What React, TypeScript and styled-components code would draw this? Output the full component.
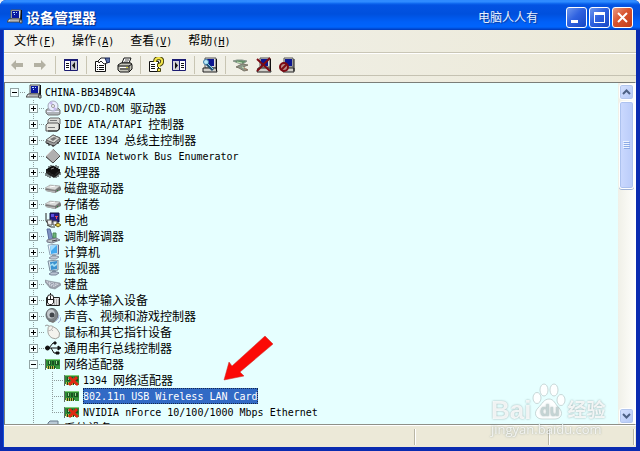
import React from "react";
import styled, { createGlobalStyle, css } from "styled-components";

const Global = createGlobalStyle`
  * { box-sizing: border-box; }
  body { margin: 0; background: #e8f0fa; }
  button { font: inherit; color: inherit; border: 0; background: none; padding: 0; margin: 0; }
  svg { display: block; flex: none; }
`;

const CJK = `"Noto Sans CJK SC", sans-serif`;

const Window = styled.div`
  display: flex;
  flex-direction: column;
  height: 100vh;
  min-height: 240px;
  font: 12px/16px ${CJK};
  color: #000;
  border-radius: 6px 6px 0 0;
  overflow: hidden;
  background: #0a2bb0;
`;

const TitleBar = styled.header`
  display: flex;
  align-items: center;
  flex: none;
  height: 30px;
  padding: 4px 7px 0 7px;
  gap: 3px;
  color: #fff;
  background: linear-gradient(#2f8bff 0, #2f8bff 2px, #1470f4 3px, #0353e2 5px, #0050dd 14px, #0060f8 22px, #0064fc 27px, #0048d0 29px, #0038b8 30px);
`;

const Title = styled.h1`
  flex: 1;
  margin: 0;
  font: bold 14px/20px ${CJK};
  text-shadow: 1px 1px 1px #0a2a80;
`;

const Author = styled.span`
  padding-right: 25px;
  font: 12px/20px ${CJK};
  color: #e8f2ff;
  text-shadow: 1px 1px 1px #0a3a9a;
`;

const Captions = styled.div`
  display: flex;
  gap: 2px;
`;

const CaptionButton = styled.button<{ $close?: boolean }>`
  display: grid;
  place-items: center;
  width: 21px;
  height: 21px;
  border: 1px solid #fff;
  border-radius: 3px;
  background: ${(p) =>
    p.$close
      ? "linear-gradient(135deg, #e89a84, #d8532e 45%, #c03c18)"
      : "linear-gradient(135deg, #6f98ee, #2f62e0 45%, #1746c4)"};
`;

const Body = styled.main`
  display: flex;
  flex-direction: column;
  flex: 1;
  min-height: 0;
  margin: 0 4px 4px;
  background: linear-gradient(90deg, #f4f4ee, #efeee3 50%, #ece9d8);
  box-shadow: -1px 0 #1450d8;
`;

const MenuBar = styled.nav`
  display: flex;
  flex: none;
  height: 23px;
  padding-left: 2px;
  border-bottom: 1px solid #c9c6b6;
`;

const MenuItem = styled.button`
  padding: 0 8px;
  white-space: nowrap;
`;

const ToolBar = styled.div`
  display: flex;
  flex: none;
  align-items: center;
  height: 23px;
  padding-left: 2px;
  border-top: 1px solid #fff;
  border-bottom: 1px solid #c5c2b2;
`;

const ToolButton = styled.button`
  width: 23px;
  padding: 2px 4px 2px 3px;
`;

const Separator = styled.span`
  width: 1px;
  height: 18px;
  margin: 0 4px 0 3px;
  background: #c8c5b3;
`;

const Pane = styled.section`
  display: flex;
  flex: 1;
  min-height: 0;
  margin-top: 6px;
  border: 1px solid #7b7e78;
  border-right-color: #fff;
  border-bottom-color: #8f9088;
  background: #e6ffff;
`;

const Tree = styled.ul`
  flex: 1;
  min-width: 0;
  overflow: hidden;
  margin: 0;
  padding: 1px 0 0 2px;
  list-style: none;
`;

const Row = styled.li`
  display: flex;
  height: 16px;
  white-space: nowrap;
`;

const dotsV = "repeating-linear-gradient(#8f9c9c 0 1px, transparent 1px 2px)";
const dotsH = "repeating-linear-gradient(90deg, #8f9c9c 0 1px, transparent 1px 2px)";

const Cell = styled.span<{ $line: "none" | "full" | "half"; $arm?: boolean }>`
  display: flex;
  flex: none;
  align-items: center;
  width: 19px;
  height: 16px;
  padding-left: 3px;
  background-repeat: no-repeat;
  ${(p) => {
    const v = p.$line === "full" ? "1px 16px" : p.$line === "half" ? "1px 8px" : "0 0";
    const h = p.$arm ? "12px 1px" : "0 0";
    return css`
      background-image: ${dotsV}, ${dotsH};
      background-size: ${v}, ${h};
      background-position: 7px 0, 7px 8px;
    `;
  }}
`;

const Expander = styled.button`
  width: 9px;
  height: 9px;
  margin-top: 1px;
  border: 1px solid #93a5a5;
  background: #f4ffff;
`;

const Label = styled.span<{ $selected?: boolean }>`
  position: relative;
  display: flex;
  height: 16px;
  margin-left: 3px;
  ${(p) =>
    p.$selected &&
    css`
      color: #fff;
      background: #316ac5;
      outline: 1px dotted #14284c;
      outline-offset: -1px;
    `}
`;

const Latin = styled.span`
  font: 10px/18px "DejaVu Sans Mono", monospace;
  white-space: pre;
`;

const Pointer = styled.svg`
  position: absolute;
  left: 140px;
  bottom: calc(100% + 7px);
`;

const ScrollBar = styled.div`
  display: flex;
  flex-direction: column;
  flex: none;
  gap: 1px;
  width: 17px;
  padding: 1px 1px 0;
  background: linear-gradient(90deg, #f0f0e8, #fefefb);
`;

const ScrollButton = styled.button`
  display: grid;
  place-items: center;
  height: 16px;
  border: 1px solid #fff;
  border-radius: 3px;
  background: linear-gradient(135deg, #d6e2ff, #b4c8f6);
  box-shadow: inset 0 0 0 1px #b3c6ee;
`;

const Thumb = styled.div`
  display: grid;
  place-items: center;
  height: 24%;
  min-height: 88px;
  border: 1px solid #fff;
  border-radius: 3px;
  background: linear-gradient(90deg, #cbd9fe, #b9cbf9);
  box-shadow: inset 0 0 0 1px #adc2ef, 0 1px #9fb2d6;
`;

const Track = styled.div`
  flex: 1;
`;

const StatusBar = styled.footer`
  display: flex;
  flex: none;
  height: 22px;
  padding: 3px 2px 2px 0;
  border-top: 1px solid #fff;
  background: #ece9d8;
`;

const StatusPanel = styled.span<{ $width?: number }>`
  flex: ${(p) => (p.$width ? `0 0 ${p.$width}px` : "1")};
  border-right: 1px solid #b9b6a5;
  box-shadow: 1px 0 #fff;
`;

const Watermark = styled.div`
  position: fixed;
  right: 35px;
  bottom: 14px;
  width: 114px;
  color: rgba(255, 255, 255, 0.85);
  text-shadow: 0 0 2px rgba(110, 130, 130, 0.7);
  white-space: nowrap;
  pointer-events: none;
`;

const Brand = styled.div`
  display: flex;
  align-items: flex-end;
  gap: 1px;
  height: 39px;
  font: bold 26px/22px "Liberation Sans", sans-serif;
`;

const BrandCn = styled.span`
  font: bold 19px/24px ${CJK};
`;

const Site = styled.div`
  font: 13px/16px "Open Sans", sans-serif;
  color: rgba(255, 255, 255, 0.8);
`;

/* Latin runs take half the width of a Chinese character. */
function Mixed({ text }: { text: string }) {
  return (
    <>
      {text.split(/([\x20-\x7e]+)/).map((part, i) =>
        /^[\x20-\x7e]+$/.test(part) ? <Latin key={i}>{part}</Latin> : part,
      )}
    </>
  );
}

const icons: Record<string, React.ReactNode> = {
  computer: (
    <>
      <path d="M4 1h10v9H4z" fill="#d9dde2" stroke="#555" />
      <path d="M14 1h1v10h-2z" fill="#111" />
      <path d="M5 2h7v7H5z" fill="#0a18a0" />
      <path d="M6 3h2v1H6zM7 5h1v1H7zM9 3h1v1H9z" fill="#b8dfff" />
      <path d="M2 10h11l1 3H0z" fill="#e4e6e6" stroke="#444" />
      <path d="M3 12h8" stroke="#888" />
      <path d="M12 11h3v3h-2z" fill="#bbb" stroke="#444" />
    </>
  ),
  disc: (
    <>
      <path d="M1 10l3-2h9l2 2v4l-2 1H3l-2-2z" fill="#aeb3b8" stroke="#777" />
      <path d="M2 11h12v1H2z" fill="#eef" />
      <circle cx="8" cy="6" r="5" fill="#e9edff" stroke="#a3a8b8" />
      <path d="M8 6L4 3l3-2zM8 6l4 3-3 2z" fill="#c5b8ec" />
      <circle cx="8" cy="6" r="1.5" fill="#fff" stroke="#999" />
    </>
  ),
  ide: (
    <>
      <path d="M3 4l2-2h9l1 1v5l-2 2H3z" fill="#dcdcd8" stroke="#666" />
      <path d="M1 9l2-2h10l1 1v5l-2 2H1z" fill="#e6e6e0" stroke="#555" />
      <path d="M3 11.500h7M5 4.500h7" stroke="#777" />
      <path d="M14.500 8v5l-2 2H3" fill="none" stroke="#222" />
    </>
  ),
  ieee: (
    <>
      <path d="M1 9l7-6 7 3v3l-6 5-8-3z" fill="#999" stroke="#444" />
      <path d="M1 8l7-5 7 3-6 5z" fill="#d7d7d2" stroke="#666" />
      <path d="M5 7l4-2 3 1-4 3z" fill="#777" />
      <path d="M2 11l2 1v2M8 13v2M13 10v2" stroke="#222" fill="none" />
    </>
  ),
  diamond: (
    <>
      <path d="M8 1l7 7-7 7-7-7z" fill="#b0b0b0" stroke="#888" />
      <path d="M8 1L1 8" stroke="#ddd" />
      <path d="M15 8l-7 7-7-6" stroke="#444" fill="none" />
    </>
  ),
  chip: (
    <>
      <path d="M1 6l7-4 7 4-6 5z" fill="#111" stroke="#000" />
      <path d="M1 6l8 5 6-5v3l-6 5-8-5z" fill="#222" />
      <path d="M1 9v3M3 10v3M5 11v3M11 11v3M13 10v3M15 8v3M4 4V2M6 3V1M11 3V1M13 4V2" stroke="#111" />
      <path d="M6 5l3-1" stroke="#888" />
    </>
  ),
  drive: (
    <>
      <path d="M0 9l5-4 10 1 1 2v2l-6 3-9-2z" fill="#777" />
      <path d="M0 8l5-3 10 1-5 4z" fill="#d8dad9" stroke="#999" strokeWidth="0.5" />
      <path d="M1 10l9 1v2l-9-2z" fill="#b2b4b4" />
      <path d="M5 7l5-1" stroke="#fff" />
      <path d="M12 10h1v1h-1z" fill="#2a8a3a" />
    </>
  ),
  battery: (
    <>
      <path d="M5 1h9v9H5z" fill="#211a86" stroke="#101040" />
      <path d="M6 2h3v3H6z" fill="#5b4ee0" />
      <path d="M10 4h3v1h-1v2h-1V5h-1z" fill="#e04a60" />
      <path d="M1 1v8l3 4" fill="none" stroke="#222" />
      <path d="M2 8h5v5H3zM8 9h4v4H8z" fill="#f0f0f0" stroke="#555" />
      <path d="M10 13l3-2 3 2-3 2z" fill="#e8d04a" stroke="#6a5a10" />
      <path d="M2 13l4 2h4" fill="none" stroke="#333" />
    </>
  ),
  modem: (
    <>
      <path d="M2 1h3l3 10-4 1z" fill="#7f94c4" stroke="#56689a" />
      <path d="M8 5h3v5H8z" fill="#6cb877" stroke="#4a8a58" />
      <path d="M2 12l9-2 4 2-8 3-5-1z" fill="#b9c0c4" stroke="#778" />
      <path d="M7 13l5-1" stroke="#3a3a40" />
    </>
  ),
  pc: (
    <>
      <path d="M3 1l10-1v10l-8 1z" fill="#f0f7ff" stroke="#91a5b8" />
      <path d="M5 2l7-1v8l-6 1z" fill="#43a9ef" />
      <path d="M5 2l7-1-6 6z" fill="#a0dcff" />
      <path d="M13 1h1v9l-1 1z" fill="#668" />
      <path d="M7 11h4v2H7z" fill="#8e99a8" />
      <path d="M4 14l3-2h5l2 1-3 2H6z" fill="#c5cbd5" stroke="#8991a0" />
    </>
  ),
  monitor: (
    <>
      <path d="M3 1l10-1v10l-8 1z" fill="#d9e5ee" stroke="#7a8c9c" />
      <path d="M5 2l7-1v8l-6 1z" fill="#3b93d0" />
      <path d="M5 5l3-2 1 2 3-2v2l-3 2-2-2-2 2z" fill="#a8e2f8" />
      <path d="M7 11h4v2H7z" fill="#7e8da0" />
      <path d="M4 14l3-2h5l2 1-3 2H6z" fill="#b9c3d2" stroke="#7a869a" />
    </>
  ),
  keyboard: (
    <>
      <path d="M0 4l4 1 11 2 1 2-6 4-5-1-5-6z" fill="#9aa0aa" stroke="#7c828e" strokeWidth="0.5" />
      <path d="M1 5l13 3-5 3-4-1z" fill="#d4d8e0" />
      <path d="M3 6l9 3M3 8l7 2M7 7l-2 3M10 7l-3 4" stroke="#8a90a0" strokeDasharray="1 1" />
    </>
  ),
  hid: (
    <>
      <path d="M1.500 5.500h13v8h-13z" fill="#e4e4e4" stroke="#222" />
      <path d="M9 8h5M9 10h5M9 12h5" stroke="#777" strokeDasharray="1 1" />
      <path d="M2.500 5l1-2h4l1 2v6l-2 1.500h-2l-2-1.500z" fill="#fff" stroke="#222" />
      <path d="M3 7.500h5M5.500 4v3M5.500 3V1" stroke="#222" fill="none" />
    </>
  ),
  sound: (
    <>
      <ellipse cx="7" cy="7" rx="6" ry="6.5" fill="#7e8488" stroke="#5d6267" />
      <ellipse cx="6" cy="6" rx="4" ry="4.5" fill="#c6cbcf" />
      <circle cx="7" cy="7" r="2.5" fill="#40454a" />
      <path d="M3 13l5 2 3-2" fill="#777" />
      <path d="M11 13q3-2 3-6M13 15q3-2 3-6" fill="none" stroke="#a3b2da" />
    </>
  ),
  mouse: (
    <>
      <path d="M3 5q0-4 4-3l5 3q4 4 2 8-3 3-7 1Q2 11 3 5z" fill="#f4f3ee" stroke="#a3a49f" />
      <path d="M3 7q4 0 5-4M6 5l2 2" stroke="#bbb" fill="none" />
      <path d="M0 2q2-2 4 0" stroke="#999" fill="none" />
    </>
  ),
  usb: (
    <g fill="none" stroke="#111">
      <path d="M2 8h12M4 8l4-5h3M6 8l3 5h3" />
      <circle cx="2.5" cy="8" r="2" fill="#111" />
      <path d="M13 6l3 2-3 2z" fill="#111" />
      <path d="M9 2h2v2H9z" fill="#111" />
      <path d="M11 12h3v2h-3z" fill="#111" />
    </g>
  ),
  net: (
    <>
      <path d="M1 3h14v9H1z" fill="#2d8b35" />
      <path d="M1 3h14v1H1z" fill="#7ed07a" />
      <path d="M0 3h1v11H0z" fill="#62706a" />
      <path d="M3 5h3v4H3zM7 5h2v4H7zM10 5h4v4h-4z" fill="#1a5222" />
      <path d="M4 5h1v3H4zM11 5h1v3h-1z" fill="#9ad894" />
      <path d="M2 10h8v3H2z" fill="#c4b84a" />
      <path d="M3.500 10v3M5.500 10v3M7.500 10v3M9.500 10v3" stroke="#174c1e" />
      <path d="M11 10h4v3h-4z" fill="#3a9842" />
    </>
  ),
  system: (
    <>
      <path d="M3 3l2-2h8v9H3z" fill="#b9cad6" stroke="#68798a" />
      <path d="M5 4h6v5H5z" fill="#4b84c0" />
    </>
  ),
  back: <path d="M2 8l5-5v3h7v4H7v3z" fill="#b3b1a3" />,
  forward: <path d="M14 8L9 3v3H2v4h7v3z" fill="#b3b1a3" />,
  panelLeft: (
    <>
      <path d="M1 2h14v12H1z" fill="#fff" />
      <path d="M1 2h14v2H1z" fill="#1b1b80" />
      <path d="M1.500 2.500h13v11h-13zM7.500 4v9" fill="none" stroke="#1b1b70" />
      <path d="M3 6.500h3M3 8.500h3M3 10.500h3" stroke="#111" />
      <path d="M8 4h6v9H8z" fill="#c9c9d2" />
      <path d="M12 5v7L9 8.500z" fill="#111" />
    </>
  ),
  panelRight: (
    <>
      <path d="M1 2h14v12H1z" fill="#fff" />
      <path d="M1 2h14v2H1z" fill="#1b1b80" />
      <path d="M1.500 2.500h13v11h-13zM8.500 4v9" fill="none" stroke="#1b1b70" />
      <path d="M10 6.500h3M10 8.500h3M10 10.500h3" stroke="#111" />
      <path d="M2 4h6v9H2z" fill="#d5d5da" />
      <path d="M4 5v7l3-3.500z" fill="#111" />
    </>
  ),
  properties: (
    <>
      <path d="M1.500 4.500h10v10h-10z" fill="#fff" stroke="#111" />
      <path d="M3 8.500h1M5 8.500h5M3 10.500h1M5 10.500h5M3 12.500h1M5 12.500h5" stroke="#111" />
      <path d="M4 4l3-3h4l2 2v3l-3 1-3-3-2 2z" fill="#fff" stroke="#222" />
      <path d="M11 1h5v4l-3 1z" fill="#5a70a8" stroke="#1b2658" />
    </>
  ),
  printer: (
    <>
      <path d="M5 6l2-5h7l-2 5z" fill="#fff" stroke="#111" />
      <path d="M8 3h4M7 5h4" stroke="#555" />
      <path d="M1 8l3-2h10l1 2v4l-3 3H3l-2-2z" fill="#c4c4ba" stroke="#111" />
      <path d="M1 9h11l3-2M3 12h8M12 9v5" fill="none" stroke="#111" />
      <path d="M3 10h7v1H3z" fill="#fff" />
      <path d="M9 10h2v1H9z" fill="#d9d43c" />
    </>
  ),
  help: (
    <>
      <path d="M1.500 4.500h9v10h-9z" fill="#fff" stroke="#111" />
      <path d="M3 7.500h4M3 9.500h4M3 11.500h4" stroke="#111" />
      <path d="M7 5q0-4 4-4 4 1 3 4 0 2-3 3v2" fill="none" stroke="#4a4610" strokeWidth="4" />
      <path d="M7 5q0-4 4-4 4 1 3 4 0 2-3 3v2" fill="none" stroke="#f4e64a" strokeWidth="2" />
      <path d="M9.500 11.500h3v3h-3z" fill="#f4e64a" stroke="#4a4610" />
    </>
  ),
  scan: (
    <>
      <path d="M3 1h11v10H3z" fill="#ddd" stroke="#555" />
      <path d="M5 2h7v7H5z" fill="#0c1690" />
      <path d="M1 11h13l1 4H1z" fill="#d0d0ca" stroke="#222" />
      <path d="M14.500 2v12" stroke="#111" />
      <circle cx="4" cy="5" r="2.500" fill="#b9e9fa" stroke="#3a7ca8" />
      <path d="M5 7l6 6" stroke="#235070" strokeWidth="3" />
      <path d="M5 6l6 6" stroke="#7fd0f0" />
    </>
  ),
  update: (
    <>
      <path d="M0 4l4-1h5l5 1-4 3-5-1z" fill="#66906a" stroke="#8a968c" />
      <path d="M3 10l6-3 6 1-5 2 5 3-4 1-5-3z" fill="#8c9889" stroke="#7b7568" />
      <path d="M4 5l5 1M9 10l4 2" stroke="#c4e2b8" />
      <path d="M11 11l3 2" stroke="#a5705c" />
    </>
  ),
  uninstall: (
    <>
      <path d="M4 1h10v9H4z" fill="#ddd" stroke="#555" />
      <path d="M5 2h7v7H5z" fill="#0c1690" />
      <path d="M2 11h12l1 4H1z" fill="#d0d0ca" stroke="#222" />
      <path d="M14.500 2v12" stroke="#111" />
      <path d="M1 2l13 12M14 1L1 14" stroke="#7c0b14" strokeWidth="2" />
    </>
  ),
  disable: (
    <>
      <path d="M5 1h9v9H5z" fill="#ddd" stroke="#555" />
      <path d="M6 2h7v7H6z" fill="#0c1690" />
      <path d="M4 11h11v4H4z" fill="#d0d0ca" stroke="#222" />
      <path d="M15 2v12" stroke="#111" />
      <circle cx="5" cy="10" r="4" fill="#b78a86" stroke="#7c0b14" strokeWidth="2" />
      <path d="M2 13l6-6" stroke="#7c0b14" strokeWidth="2" />
    </>
  ),
};

icons.netOff = (
  <>
    {icons.net}
    <path d="M5 5l9 8M13 5l-8 8" stroke="#e02a14" strokeWidth="3" />
  </>
);

function Icon({ name }: { name: string }) {
  return (
    <svg width="16" height="16" viewBox="0 0 16 16" aria-hidden>
      {icons[name]}
    </svg>
  );
}

const menus = [
  ["文件", "F"],
  ["操作", "A"],
  ["查看", "V"],
  ["帮助", "H"],
];

const tools: [string, string][][] = [
  [["back", "后退"], ["forward", "前进"]],
  [["panelLeft", "控制台树"]],
  [["properties", "属性"], ["printer", "打印"]],
  [["help", "帮助"], ["panelRight", "操作窗格"]],
  [["scan", "扫描"]],
  [["update", "更新"], ["uninstall", "卸载"], ["disable", "停用"]],
];

type Node = { level: 0 | 1 | 2; icon: string; text: string; open?: boolean; selected?: boolean; last?: boolean };

const nodes: Node[] = [
  { level: 0, icon: "computer", text: "CHINA-BB34B9C4A", open: true },
  { level: 1, icon: "disc", text: "DVD/CD-ROM 驱动器" },
  { level: 1, icon: "ide", text: "IDE ATA/ATAPI 控制器" },
  { level: 1, icon: "ieee", text: "IEEE 1394 总线主控制器" },
  { level: 1, icon: "diamond", text: "NVIDIA Network Bus Enumerator" },
  { level: 1, icon: "chip", text: "处理器" },
  { level: 1, icon: "drive", text: "磁盘驱动器" },
  { level: 1, icon: "drive", text: "存储卷" },
  { level: 1, icon: "battery", text: "电池" },
  { level: 1, icon: "modem", text: "调制解调器" },
  { level: 1, icon: "pc", text: "计算机" },
  { level: 1, icon: "monitor", text: "监视器" },
  { level: 1, icon: "keyboard", text: "键盘" },
  { level: 1, icon: "hid", text: "人体学输入设备" },
  { level: 1, icon: "sound", text: "声音、视频和游戏控制器" },
  { level: 1, icon: "mouse", text: "鼠标和其它指针设备" },
  { level: 1, icon: "usb", text: "通用串行总线控制器" },
  { level: 1, icon: "net", text: "网络适配器", open: true },
  { level: 2, icon: "netOff", text: "1394 网络适配器" },
  { level: 2, icon: "net", text: "802.11n USB Wireless LAN Card", selected: true },
  { level: 2, icon: "netOff", text: "NVIDIA nForce 10/100/1000 Mbps Ethernet", last: true },
  { level: 1, icon: "system", text: "系统设备" },
];

function TreeRow({ node }: { node: Node }) {
  return (
    <Row>
      {node.level > 0 && <Cell $line="none" />}
      {node.level > 1 && <Cell $line="full" />}
      <Cell $line={node.level === 0 ? "none" : node.last ? "half" : "full"} $arm>
        {node.level < 2 && (
          <Expander aria-label={(node.open ? "折叠 " : "展开 ") + node.text}>
            <svg width="7" height="7" viewBox="0 0 7 7">
              <path d={node.open ? "M1 3h5v1H1z" : "M1 3h5v1H1zM3 1h1v5H3z"} fill="#000" />
            </svg>
          </Expander>
        )}
      </Cell>
      <Icon name={node.icon} />
      <Label $selected={node.selected}>
        <Mixed text={node.text} />
        {node.selected && (
          <Pointer width="50" height="46" viewBox="0 0 50 46">
            <path d="M1 45L6 27l3 4L42 1l8 8-33 28 4 4z" fill="#fb0a06" stroke="#c8302a" strokeWidth="0.5" />
          </Pointer>
        )}
      </Label>
    </Row>
  );
}

export default function App() {
  return (
    <>
      <Global />
      <Window>
        <TitleBar>
          <Icon name="computer" />
          <Title>设备管理器</Title>
          <Author>电脑人人有</Author>
          <Captions>
            <CaptionButton aria-label="最小化">
              <svg width="15" height="15" viewBox="0 0 15 15"><path d="M2 10h7v3H2z" fill="#fff" /></svg>
            </CaptionButton>
            <CaptionButton aria-label="最大化">
              <svg width="15" height="15" viewBox="0 0 15 15"><path d="M2 2h11v11H2zM3 5v7h9V5z" fill="#fff" fillRule="evenodd" /></svg>
            </CaptionButton>
            <CaptionButton $close aria-label="关闭">
              <svg width="15" height="15" viewBox="0 0 15 15"><path d="M3 3l9 9M12 3l-9 9" stroke="#fff" strokeWidth="2" /></svg>
            </CaptionButton>
          </Captions>
        </TitleBar>
        <Body>
          <MenuBar>
            {menus.map(([name, key]) => (
              <MenuItem key={key}>
                {name}
                <Latin>(<u>{key}</u>)</Latin>
              </MenuItem>
            ))}
          </MenuBar>
          <ToolBar>
            {tools.map((group, i) => (
              <React.Fragment key={i}>
                {i > 0 && <Separator />}
                {group.map(([icon, label]) => (
                  <ToolButton key={icon} aria-label={label}>
                    <Icon name={icon} />
                  </ToolButton>
                ))}
              </React.Fragment>
            ))}
          </ToolBar>
          <Pane>
            <Tree>
              {nodes.map((n) => (
                <TreeRow key={n.text} node={n} />
              ))}
            </Tree>
            <ScrollBar>
              <ScrollButton aria-label="向上滚动">
                <svg width="9" height="6" viewBox="0 0 9 6"><path d="M1 5l3.500-3.500L8 5" fill="none" stroke="#4d6185" strokeWidth="2" /></svg>
              </ScrollButton>
              <Thumb>
                <svg width="7" height="8" viewBox="0 0 7 8">
                  <path d="M0 0h6v1H0zM0 2h6v1H0zM0 4h6v1H0zM0 6h6v1H0z" fill="#eef4fe" />
                  <path d="M1 1h6v1H1zM1 3h6v1H1zM1 5h6v1H1zM1 7h6v1H1z" fill="#8caae6" />
                </svg>
              </Thumb>
              <Track />
              <ScrollButton aria-label="向下滚动">
                <svg width="9" height="6" viewBox="0 0 9 6"><path d="M1 1l3.500 3.500L8 1" fill="none" stroke="#4d6185" strokeWidth="2" /></svg>
              </ScrollButton>
            </ScrollBar>
          </Pane>
          <StatusBar>
            <StatusPanel />
            <StatusPanel $width={134} />
            <StatusPanel $width={85} />
          </StatusBar>
        </Body>
      </Window>
      <Watermark>
        <Brand>
          <span>Bai</span>
          <svg width="34" height="38" viewBox="0 0 34 38">
            <g fill="#fff" fillOpacity="0.9" stroke="#b5c6c6" strokeWidth="0.700">
              <ellipse cx="5" cy="15" rx="4" ry="5.500" />
              <ellipse cx="12" cy="7" rx="4" ry="6" />
              <ellipse cx="22" cy="7" rx="4" ry="6" />
              <ellipse cx="29" cy="17" rx="4" ry="5.500" />
              <path d="M17 16c5 0 6 5 10 9 5 5 2 11-4 11H10c-6 0-9-6-4-11 4-4 6-9 11-9z" />
            </g>
            <text x="8" y="33" fontFamily="Liberation Sans, sans-serif" fontSize="16" fontWeight="bold" fill="#c4d4d4">du</text>
          </svg>
          <BrandCn>经验</BrandCn>
        </Brand>
        <Site>jingyan.baidu.com</Site>
      </Watermark>
    </>
  );
}
